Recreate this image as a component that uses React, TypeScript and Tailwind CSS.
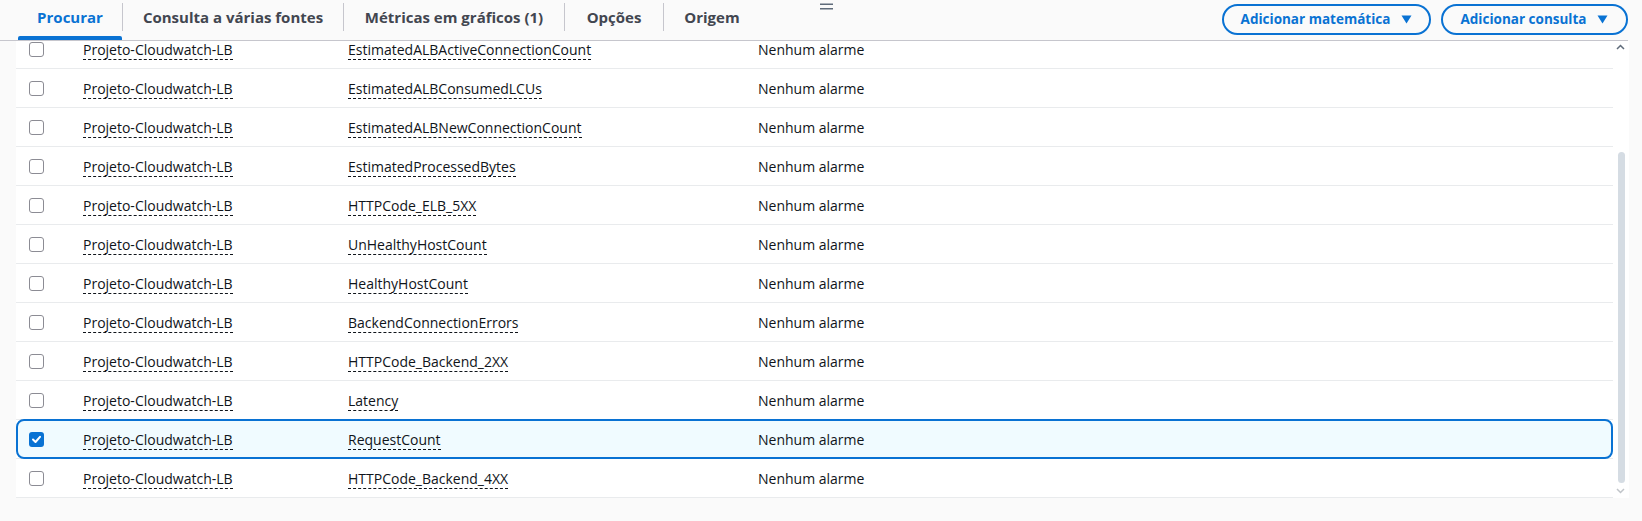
import React from "react";

const rows = [
  "EstimatedALBActiveConnectionCount",
  "EstimatedALBConsumedLCUs",
  "EstimatedALBNewConnectionCount",
  "EstimatedProcessedBytes",
  "HTTPCode_ELB_5XX",
  "UnHealthyHostCount",
  "HealthyHostCount",
  "BackendConnectionErrors",
  "HTTPCode_Backend_2XX",
  "Latency",
  "RequestCount",
  "HTTPCode_Backend_4XX",
];

function Caret() {
  return (
    <svg width="11" height="9" viewBox="0 0 11 9" className="shrink-0">
      <path d="M0.5 0.5 H10.5 L5.5 8.5 Z" fill="#0972d3" />
    </svg>
  );
}

function Checkbox({ checked }: { checked: boolean }) {
  if (checked) {
    return (
      <div className="w-[15px] h-[15px] rounded-[3px] bg-[#0972d3] flex items-center justify-center">
        <svg width="11" height="11" viewBox="0 0 11 11">
          <path d="M2 5.5 L4.5 8 L9 2.8" fill="none" stroke="white" strokeWidth="2" strokeLinecap="round" strokeLinejoin="round" />
        </svg>
      </div>
    );
  }
  return <div className="w-[15px] h-[15px] rounded-[3px] border-[1.5px] border-[#8c8c94] bg-white" />;
}

function Dashed({ children }: { children: React.ReactNode }) {
  return <span className="border-b border-dashed border-[#0f141a] leading-[18px]">{children}</span>;
}

export default function App() {
  const tabs = [
    { label: "Procurar", w: "w-[104px]", active: true },
    { label: "Consulta a várias fontes", w: "w-[220px]" },
    { label: "Métricas em gráficos (1)", w: "w-[220px]" },
    { label: "Opções", w: "w-[98px]" },
    { label: "Origem", w: "w-[96px]" },
  ];
  return (
    <div
      className="relative w-[1642px] h-[521px] bg-[#fafafa] overflow-hidden text-[#0f141a]"
      style={{ fontFamily: '"Open Sans", "Noto Sans", sans-serif' }}
    >
      {/* header */}
      <div className="relative h-[41px] flex justify-between border-b border-[#c6c6cd] w-[1628px]">
        <div className="flex pl-[18px] h-[40px]">
          {tabs.map((t, i) => (
            <React.Fragment key={t.label}>
              {i > 0 && <div className="w-px bg-[#c6c6cd] mt-[3px] h-[28px]" />}
              <div className={`relative ${t.w} h-[40px] flex justify-center pt-[6px]`}>
                <span
                  className={`text-[15px] font-bold leading-[22px] ${t.active ? "text-[#0972d3]" : "text-[#424650]"}`}
                >
                  {t.label}
                </span>
                {t.active && (
                  <div className="absolute left-0 right-0 bottom-0 h-[4px] rounded-t-[2px] bg-[#0972d3]" />
                )}
              </div>
            </React.Fragment>
          ))}
        </div>
        <div className="absolute left-[820px] top-[3px]">
          <svg width="13" height="7" viewBox="0 0 13 7">
            <rect x="0" y="0.5" width="13" height="1.5" fill="#5f6b7a" />
            <rect x="0" y="5" width="13" height="1.5" fill="#5f6b7a" />
          </svg>
        </div>
        <div className="flex gap-[10px] pt-[4px]">
          <button className="h-[31px] w-[209px] rounded-full border-2 border-[#0972d3] flex items-center justify-center gap-[11px] text-[13.5px] font-bold text-[#0972d3]">
            <span>Adicionar matemática</span>
            <Caret />
          </button>
          <button className="h-[31px] w-[187px] rounded-full border-2 border-[#0972d3] flex items-center justify-center gap-[11px] text-[13.5px] font-bold text-[#0972d3]">
            <span>Adicionar consulta</span>
            <Caret />
          </button>
        </div>
      </div>

      {/* table panel */}
      <div className="ml-[16px] w-[1613px] h-[457px] bg-white flex">
        <div className="w-[1597px] h-full overflow-hidden">
          <div className="-mt-[11px]">
            {rows.map((metric) => {
              const sel = metric === "RequestCount";
              return (
                <div key={metric} className="relative h-[39px] border-b border-[#e9ebed]">
                  {sel && (
                    <div className="absolute left-0 right-0 -top-px bottom-[-1px] rounded-[8px] border-2 border-[#0972d3] bg-[#f0fbff]" />
                  )}
                  <div className="relative grid grid-cols-[67px_265px_410px_1fr] h-[38px] items-center text-[14px]">
                    <div className="pl-[13px] flex items-center">
                      <Checkbox checked={sel} />
                    </div>
                    <div>
                      <Dashed>Projeto-Cloudwatch-LB</Dashed>
                    </div>
                    <div>
                      <Dashed>{metric}</Dashed>
                    </div>
                    <div>Nenhum alarme</div>
                  </div>
                </div>
              );
            })}
          </div>
        </div>
        {/* scrollbar */}
        <div className="relative w-[16px] h-full">
          <svg className="absolute left-[3px] top-[3px]" width="9" height="6" viewBox="0 0 9 6">
            <path d="M1 5 L4.5 1.5 L8 5" fill="none" stroke="#5f6b7a" strokeWidth="1.5" />
          </svg>
          <div className="absolute left-[5px] w-[7px] top-[111px] h-[331px] rounded-full bg-[#d5dce3]" />
          <svg className="absolute left-[3px] top-[447px]" width="9" height="6" viewBox="0 0 9 6">
            <path d="M1 1 L4.5 4.5 L8 1" fill="none" stroke="#c0c4c9" strokeWidth="1.5" />
          </svg>
        </div>
      </div>
    </div>
  );
}
